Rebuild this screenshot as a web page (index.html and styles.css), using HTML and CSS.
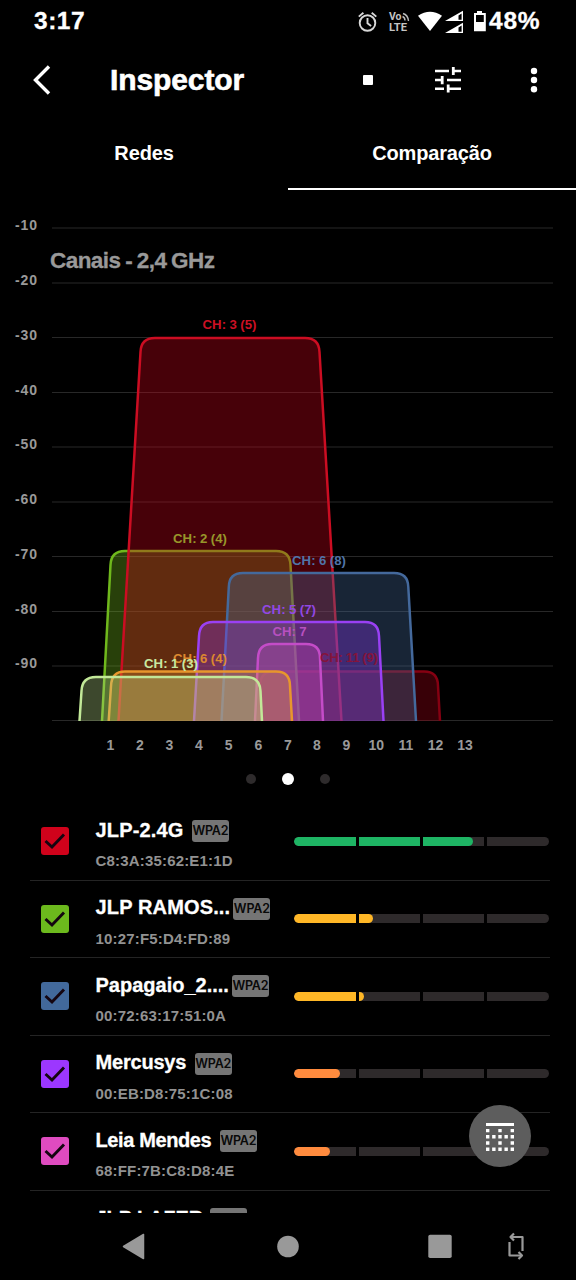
FILE: index.html
```html
<!DOCTYPE html>
<html lang="pt-BR">
<head>
<meta charset="utf-8">
<title>Inspector</title>
<link rel="stylesheet" href="styles.css">
</head>
<body>
<div class="phone">
  <header class="status">
    <span class="clock">3:17</span>
    <svg class="status-icons" width="132" height="28" viewBox="356 8 132 28">
      <g fill="none" stroke="#d8d8d8" stroke-width="1.9">
        <circle cx="367.5" cy="23" r="7.8"/>
        <path d="M367.5 18v5.300l3.600 2.600M358.800 16.600l4.600-3.900M376.300 16.600l-4.600-3.900"/>
      </g>
      <text x="389" y="19.600" class="volte" textLength="12.500" lengthAdjust="spacingAndGlyphs">Vo</text>
      <text x="389" y="30.800" class="volte" textLength="18" lengthAdjust="spacingAndGlyphs">LTE</text>
      <g fill="none" stroke="#bbb" stroke-width="1.400"><path d="M402.500 16.500q2.500 1 2.500 4M403 13.500q5 1.500 5.500 7.500"/></g>
      <path d="M418 15.800Q430 7.500 442 15.800L430 31z" fill="#fff"/>
      <path d="M445 21L463 10.800V21z M445 33L463 22.800V33z" fill="#fff"/>
      <path d="M458.500 15.500L461.600 13.600V19.700H458.500z M458.500 27.500L461.600 25.600V31.700H458.500z" fill="#000"/>
      <path d="M474.500 13h2.500v-2h5v2h3.800v18.200h-11.800v-18.200z" fill="#fff"/>
      <path d="M476 15h7.800v7H476z" fill="#000"/>
    </svg>
    <span class="battery">48%</span>
  </header>

  <div class="appbar">
    <svg class="back" width="20" height="32" viewBox="0 0 20 32"><path d="M18 2.500L4.500 16l13.500 13.500" fill="none" stroke="#fff" stroke-width="3.400"/></svg>
    <h1 class="title">Inspector</h1>
    <span class="stop"></span>
    <svg class="tune" width="26" height="26" viewBox="0 0 26 26">
      <path d="M0 4h14M17 4h9M0 13h6M12 13h14M0 21.700h9M12 21.700h14" stroke="#fff" stroke-width="2.600"/>
      <path d="M18.300 0v8M7.200 9v8.200M13.200 17.600v8" stroke="#fff" stroke-width="2.800"/>
    </svg>
    <svg class="more" width="8" height="26" viewBox="0 0 8 26" fill="#fff"><circle cx="4" cy="4" r="3.200"/><circle cx="4" cy="13" r="3.200"/><circle cx="4" cy="22.200" r="3.200"/></svg>
  </div>

  <nav class="tabs">
    <div class="tab">Redes</div>
    <div class="tab active">Comparação</div>
  </nav>

  <svg class="chart" width="576" height="570" viewBox="0 190 576 570">
    <path class="grid" d="M52 228H553M52 283H553M52 337.500H553M52 392.500H553M52 447H553M52 502H553M52 556.500H553M52 611.500H553M52 666H553M52 720.500H553"/>
    <g class="axis">
      <text x="15" y="230" textLength="22">-10</text><text x="15" y="285" textLength="22">-20</text>
      <text x="15" y="339.500" textLength="22">-30</text><text x="15" y="394.500" textLength="22">-40</text>
      <text x="15" y="449" textLength="22">-50</text><text x="15" y="504" textLength="22">-60</text>
      <text x="15" y="558.500" textLength="22">-70</text><text x="15" y="613.500" textLength="22">-80</text>
      <text x="15" y="668" textLength="22">-90</text>
    </g>
    <g class="axis mid">
      <text x="110.500" y="750.300">1</text><text x="140" y="750.300">2</text><text x="169.500" y="750.300">3</text>
      <text x="199" y="750.300">4</text><text x="228.700" y="750.300">5</text><text x="258.300" y="750.300">6</text>
      <text x="287.800" y="750.300">7</text><text x="317" y="750.300">8</text><text x="346.500" y="750.300">9</text>
      <text x="376.300" y="750.300">10</text><text x="405.800" y="750.300">11</text><text x="435.500" y="750.300">12</text>
      <text x="465" y="750.300">13</text>
    </g>
    <text class="heading" x="50" y="268" textLength="165">Canais - 2,4 GHz</text>
    <g class="mid ch">
      <g class="n-dark"><path d="M258 721L260 686Q260 671.500 274 671.500H424Q438 671.500 438 686L440 721"/></g>
      <g class="n-green"><path d="M102 721L110.500 565Q111 551 125 551H276Q290 551 290.500 565L299 721"/></g>
      <g class="n-red"><path d="M118.500 721L140.500 352Q141 338 155 338H305Q319 338 319.500 352L341.500 721"/></g>
      <g class="n-blue"><path d="M221.500 721L228.800 587Q229 573 243 573H394Q408 573 408.300 587L416 721"/></g>
      <g class="n-purple"><path d="M194 721L199 636Q199.500 622 213 622H365Q378.500 622 379 636L383.500 721"/></g>
      <g class="n-pink"><path d="M255 721L258 658Q258.500 644 272 644H306Q320 644 320 658L323 721"/></g>
      <g class="n-orange"><path d="M108.700 721L111 686Q111.500 671.500 125 671.500H276Q290 671.500 290 686L292 721"/></g>
      <g class="n-lime"><path d="M79.500 721L81.500 691Q82 677 96 677H246Q260 677 260.500 691L262 721"/></g>
      <text class="t-dark" x="349" y="662" textLength="58">CH: 11 (9)</text>
      <text class="t-green" x="200" y="542.500" textLength="54">CH: 2 (4)</text>
      <text class="t-red" x="229.500" y="329" textLength="54">CH: 3 (5)</text>
      <text class="t-blue" x="319" y="564.500" textLength="54">CH: 6 (8)</text>
      <text class="t-purple" x="289" y="613.500" textLength="54">CH: 5 (7)</text>
      <text class="t-pink" x="289.500" y="635.500" textLength="34">CH: 7</text>
      <text class="t-orange" x="200" y="662.500" textLength="54">CH: 6 (4)</text>
      <text class="t-lime" x="171" y="668" textLength="54">CH: 1 (3)</text>
    </g>
  </svg>

  <div class="dots"><i></i><i class="on"></i><i></i></div>

  <main class="list">
    <div class="row">
      <span class="check c-red"><svg viewBox="0 0 28 28"><path d="M4.500 14l6.500 6L23 7.500"/></svg></span>
      <div class="info"><div class="line"><span class="name wide">JLP-2.4G</span><span class="badge gap">WPA2</span></div><div class="mac">C8:3A:35:62:E1:1D</div></div>
      <div class="meter"><i class="fill good" style="width:179px"></i></div>
    </div>
    <div class="row">
      <span class="check c-green"><svg viewBox="0 0 28 28"><path d="M4.500 14l6.500 6L23 7.500"/></svg></span>
      <div class="info"><div class="line"><span class="name wide">JLP RAMOS...</span><span class="badge">WPA2</span></div><div class="mac">10:27:F5:D4:FD:89</div></div>
      <div class="meter"><i class="fill fair" style="width:79px"></i></div>
    </div>
    <div class="row">
      <span class="check c-blue"><svg viewBox="0 0 28 28"><path d="M4.500 14l6.500 6L23 7.500"/></svg></span>
      <div class="info"><div class="line"><span class="name">Papagaio_2....</span><span class="badge">WPA2</span></div><div class="mac">00:72:63:17:51:0A</div></div>
      <div class="meter"><i class="fill fair" style="width:70px"></i></div>
    </div>
    <div class="row">
      <span class="check c-purple"><svg viewBox="0 0 28 28"><path d="M4.500 14l6.500 6L23 7.500"/></svg></span>
      <div class="info"><div class="line"><span class="name tight">Mercusys</span><span class="badge gap">WPA2</span></div><div class="mac">00:EB:D8:75:1C:08</div></div>
      <div class="meter"><i class="fill weak" style="width:46px"></i></div>
    </div>
    <div class="row">
      <span class="check c-pink"><svg viewBox="0 0 28 28"><path d="M4.500 14l6.500 6L23 7.500"/></svg></span>
      <div class="info"><div class="line"><span class="name tighter">Leia Mendes</span><span class="badge gap">WPA2</span></div><div class="mac">68:FF:7B:C8:D8:4E</div></div>
      <div class="meter"><i class="fill weak" style="width:36px"></i></div>
    </div>
    <div class="row last">
      <span class="check"></span>
      <div class="info"><div class="line"><span class="name">JLP LAZER</span><span class="badge">WPA2</span></div></div>
    </div>
  </main>

  <button class="fab" aria-label="Grade">
    <svg width="28" height="28" viewBox="0 0 28 28">
      <path d="M0 1.500h28" stroke="#fff" stroke-width="3"/>
      <g stroke="#fff" stroke-width="3.400" fill="none">
        <path d="M0 7.600h3.400M12.300 7.600h3.400M24.600 7.600H28M0 20h3.400M12.300 20h3.400M24.600 20H28"/>
        <path d="M0 13.800h28M0 26.200h28" stroke-dasharray="3.400 2.750"/>
      </g>
    </svg>
  </button>

  <footer class="navbar">
    <svg width="576" height="66" viewBox="0 1214 576 66">
      <g fill="#999">
        <path d="M123.500 1246.500L143.500 1234.500V1258.500z" stroke="#999" stroke-width="1.500" stroke-linejoin="round"/>
        <circle cx="288" cy="1246.500" r="10.800"/>
        <rect x="428.300" y="1234.800" width="23.400" height="23.200" rx="1.800"/>
      </g>
      <g fill="none" stroke="#999" stroke-width="2.200" stroke-linejoin="round">
        <path d="M511 1237H522.500V1251M509.500 1242V1255.500H521"/>
        <path d="M514 1233.500L510.500 1237L514 1240.500M518.500 1252L522 1255.500L518.500 1259"/>
      </g>
    </svg>
  </footer>
</div>
</body>
</html>
```
FILE: styles.css
```css
* { box-sizing: border-box; }
body { margin: 0; background: #000; color: #fff; font-family: "Liberation Sans", Arial, sans-serif; font-weight: 700; }
.phone { position: relative; width: 576px; height: 1280px; overflow: hidden; display: flex; flex-direction: column; background: #000; }

.status { height: 44px; display: flex; align-items: center; padding: 0 0 2px 34px; }
.clock { font-size: 24.5px; flex: 0 0 322px; letter-spacing: 0.5px; }
.status-icons { flex: none; display: block; margin-top: 2px; }
.battery { font-size: 24.5px; margin-left: 1px; letter-spacing: 0.8px; }
.clock, .battery { -webkit-text-stroke: 0.3px #fff; }
.volte { font: 700 10px Roboto, sans-serif; fill: #c4c4c4; }

.appbar { height: 72px; display: flex; align-items: center; padding-left: 31px; }
.title { margin: 0 0 0 59px; width: 253px; font-size: 30px; letter-spacing: -0.1px; -webkit-text-stroke: 0.6px #fff; }
.stop { width: 10px; height: 10px; border-radius: 1px; background: #fff; }
.tune { margin-left: 62px; }
.more { margin-left: 69px; }

.tabs { height: 74px; display: flex; font-size: 20px; letter-spacing: -0.15px; }
.tab { flex: 1; height: 74px; text-align: center; line-height: 74px; }
.tab.active { border-bottom: 2px solid #fff; }
.chart { display: block; flex: none; }

.grid { stroke: #282828; stroke-width: 1.2; fill: none; }
.axis { font-size: 14px; fill: #999; }
.mid text { text-anchor: middle; }
.heading { font-size: 22.5px; fill: #999; word-spacing: -1px; stroke: #999; stroke-width: 0.3px; }
.ch { font-size: 13.2px; stroke-width: 2.5px; fill-opacity: 0.35; }
.ch text { stroke: none; fill-opacity: 1; word-spacing: -0.4px; }
.n-dark { stroke: #850012; fill: #a00014; }
.n-green { stroke: #6fb81c; fill: #74b81c; }
.n-red { stroke: #cb0d22; fill: #d0021b; fill-opacity: 0.34; }
.n-blue { stroke: #44699c; fill: #44699c; }
.n-purple { stroke: #9a40f4; fill: #9038f0; fill-opacity: 0.33; }
.n-pink { stroke: #c44cc8; fill: #d44cc0; fill-opacity: 0.28; }
.n-orange { stroke: #e8962c; fill: #e89a30; fill-opacity: 0.3; }
.n-lime { stroke: #c2e898; fill: #b8dc88; fill-opacity: 0.33; }
.t-dark { fill: #84143c; }
.t-green { fill: #98962a; }
.t-red { fill: #cc1024; }
.t-blue { fill: #5074a8; }
.t-purple { fill: #9248e4; }
.t-pink { fill: #b850c0; }
.t-orange { fill: #dc8830; }
.t-lime { fill: #c8e8a0; }

.dots { height: 43px; flex: none; display: flex; justify-content: center; align-items: center; gap: 26px; padding-bottom: 6px; }
.dots i { width: 10px; height: 10px; border-radius: 50%; background: #2e2b2c; }
.dots i.on { width: 12px; height: 12px; background: #fff; }

.list { height: 410px; flex: none; overflow: hidden; }
.row { height: 77.6px; margin: 0 26px 0 30px; padding-left: 11px; display: flex; border-bottom: 1px solid #242424; }
.row.last { border-bottom: 0; }
.row.last .name { padding-top: 2px; letter-spacing: -0.1px; }
.row.last .badge { margin-left: 7px; }
.check { width: 28px; height: 28px; margin-top: 24px; border-radius: 3px; flex: none; }
.check svg { display: block; width: 28px; height: 28px; }
.check path { fill: none; stroke: #140510; stroke-width: 2.9; }
.c-red { background: #d0021b; }
.c-green { background: #6cb91d; }
.c-blue { background: #42699b; }
.c-purple { background: #9c37ff; }
.c-pink { background: #df4bc0; }
.info { width: 198px; margin-left: 26.5px; padding-top: 14px; flex: none; }
.line { height: 25px; display: flex; align-items: center; }
.name { font-size: 20px; line-height: 24px; white-space: nowrap; -webkit-text-stroke: 0.3px #fff; }
.name.wide { letter-spacing: 0.15px; }
.name.tight { letter-spacing: -0.2px; }
.name.tighter { letter-spacing: -0.38px; }
.badge { width: 37px; height: 22px; margin: 3px 0 0 3px; border-radius: 3px; background: #757575; color: #090909; font: 600 12.5px/22px Inter, sans-serif; letter-spacing: -0.2px; text-align: center; flex: none; }
.badge.gap { margin-left: 8.5px; }
.mac { margin-top: 9px; font-size: 15px; line-height: 19px; letter-spacing: 0.18px; color: #929292; }
.meter { position: relative; width: 255.5px; height: 9px; margin-top: 33.5px; border-radius: 5px; overflow: hidden; background: #2e2a2b; flex: none; }
.meter::after { content: ""; position: absolute; inset: 0; background: linear-gradient(90deg, transparent 62.5px, #000 62.5px, #000 65.5px, transparent 65.5px, transparent 126.5px, #000 126.5px, #000 129.5px, transparent 129.5px, transparent 190px, #000 190px, #000 193px, transparent 193px); }
.fill { display: block; height: 9px; border-radius: 5px; }
.good { background: #1eb464; }
.fair { background: #ffb726; }
.weak { background: #ff8b3e; }

.fab { position: absolute; left: 469px; top: 1105px; width: 62px; height: 62px; padding: 1px 0 0; border: 0; border-radius: 50%; background: #5d5d5d; display: grid; place-items: center; }
.navbar { height: 67px; flex: none; }
.navbar svg { display: block; margin-top: 1px; }
```
